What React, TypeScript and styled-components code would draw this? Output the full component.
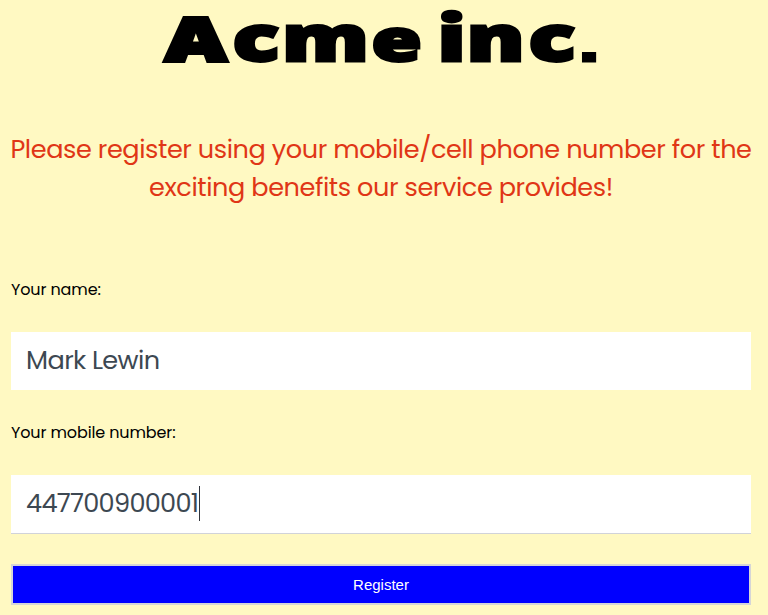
import React from "react";
import styled, { createGlobalStyle } from "styled-components";

const GlobalStyle = createGlobalStyle`
  * { box-sizing: border-box; }
  html, body { margin: 0; background: #fff9c2; }
  body { font-family: Poppins, Inter, sans-serif; font-feature-settings: "cv11"; color: #000; }
`;

const Page = styled.main`
  width: 768px;
  height: 615px;
  background: #fff9c2;
  display: flex;
  flex-direction: column;
  padding: 0 17px 0 11px;
`;

const Logo = styled.svg`
  display: block;
  width: 740px;
  height: 76px;
  flex: none;
  overflow: visible;
  font-family: "Open Sans", sans-serif;
  font-size: 63px;
  font-weight: 800;
`;

const Intro = styled.h2`
  margin: 54px -10px 0;
  height: 76px;
  font-size: 25.6px;
  font-weight: 400;
  line-height: 38px;
  letter-spacing: -0.43px;
  text-align: center;
  color: #e03616;
`;

const IntroLine = styled.span`
  display: block;
  white-space: nowrap;
`;

const Form = styled.form`
  display: flex;
  flex-direction: column;
  margin-top: 72px;
`;

const Label = styled.label`
  height: 24px;
  font-size: 16px;
  line-height: 24px;
  letter-spacing: -0.12px;
`;

const Field = styled.div`
  position: relative;
  height: 59px;
  margin: 30px 0;
`;

const Input = styled.input<{ $active?: boolean }>`
  display: block;
  width: 100%;
  height: ${(p) => (p.$active ? 59 : 58)}px;
  padding: 0 15px 2px;
  border: 0;
  border-bottom: ${(p) => (p.$active ? "1px solid #d1d3d9" : "0")};
  border-radius: 0;
  outline: 0;
  background: #fff;
  color: #3d4852;
  font: inherit;
  font-feature-settings: inherit;
  font-size: 25.6px;
  letter-spacing: ${(p) => (p.$active ? -0.72 : -0.6)}px;
`;

const Caret = styled.span`
  position: absolute;
  left: 188px;
  top: 11px;
  width: 1px;
  height: 35px;
  background: #30343c;
`;

const Button = styled.button`
  height: 41px;
  padding: 0;
  border: 2px solid #d5d5d7;
  border-radius: 0;
  background: #0000ff;
  color: #fff;
  font: 15px "Liberation Sans", Arial, sans-serif;
`;

const HeavyLetter = styled.tspan`
  font-size: 61px;
  stroke-width: 3.8px;
`;

const NarrowLetter = styled.tspan`
  font-size: 59px;
`;

const Stop = styled.tspan`
  font-family: "Liberation Sans", Arial, sans-serif;
  font-weight: 700;
  font-size: 50px;
  stroke-width: 3.2px;
`;

export default function App() {
  return (
    <>
      <GlobalStyle />
      <Page>
        <Logo viewBox="11 0 740 76" role="img" aria-label="Acme inc.">
          <text
            transform="scale(1.38 1)"
            x="119.8 168.4 204.4 269.3 304 317 338 383 420"
            y="60.8"
            stroke="#000"
            strokeWidth="2.8"
          >
            <HeavyLetter>A</HeavyLetter>cm<NarrowLetter>e</NarrowLetter> inc<Stop>.</Stop>
          </text>
        </Logo>
        <Intro>
          <IntroLine>Please register using your mobile/cell phone number for the</IntroLine>
          <IntroLine>exciting benefits our service provides!</IntroLine>
        </Intro>
        <Form onSubmit={(e) => e.preventDefault()}>
          <Label htmlFor="name">Your name:</Label>
          <Field>
            <Input id="name" defaultValue="Mark Lewin" />
          </Field>
          <Label htmlFor="mobile">Your mobile number:</Label>
          <Field>
            <Input id="mobile" defaultValue="447700900001" $active />
            <Caret />
          </Field>
          <Button type="submit">Register</Button>
        </Form>
      </Page>
    </>
  );
}
